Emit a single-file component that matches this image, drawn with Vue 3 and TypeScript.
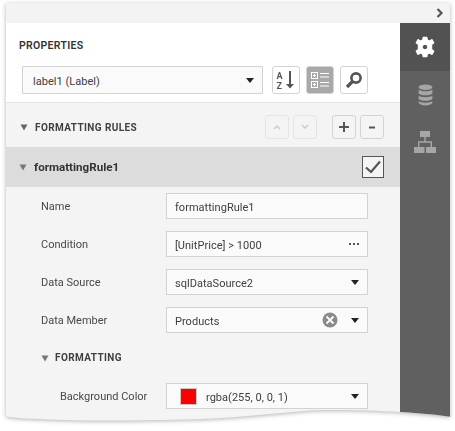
<script setup lang="ts">
interface Field { label: string; value: string; kind: 'text' | 'dots' | 'select' | 'clear' }
const fields: Field[] = [
  { label: 'Name', value: 'formattingRule1', kind: 'text' },
  { label: 'Condition', value: '[UnitPrice] > 1000', kind: 'dots' },
  { label: 'Data Source', value: 'sqlDataSource2', kind: 'select' },
  { label: 'Data Member', value: 'Products', kind: 'clear' },
]
</script>

<template>
  <div class="shadow">
    <div class="window">
      <div class="topbar">
        <svg class="chev" width="8" height="10" viewBox="0 0 8 10"><path d="M1.5 1 L5.5 5 L1.5 9" fill="none" stroke="#555" stroke-width="2.2" /></svg>
      </div>
      <div class="body">
        <div class="main">
          <section class="props">
            <h2 class="title">PROPERTIES</h2>
            <div class="toolbar">
              <div class="combo">
                <span class="val">label1 (Label)</span>
                <i class="caret"></i>
              </div>
              <button class="tool">
                <svg class="over" width="22" height="20" viewBox="0 0 22 20">
                  <text x="1.5" y="8.5" class="az">A</text>
                  <text x="1.5" y="18.5" class="az">Z</text>
                  <path d="M15 1 V16" stroke="#555" stroke-width="2" />
                  <path d="M11 14 H19 L15 18.5 Z" fill="#555" />
                </svg>
              </button>
              <button class="tool active">
                <svg width="20" height="20" viewBox="0 0 20 20" fill="none" stroke="#fff">
                  <rect x="1.5" y="2.5" width="6" height="6" />
                  <rect x="1.5" y="11.5" width="6" height="6" />
                  <path d="M3 5.5 H6 M4.5 4 V7 M3 14.5 H6 M4.5 13 V16 M10 3.5 H19 M10 7 H19 M10 12.5 H19 M10 16 H19" />
                </svg>
              </button>
              <button class="tool">
                <svg width="18" height="18" viewBox="0 0 18 18" fill="none" stroke="#555">
                  <circle cx="11" cy="7" r="4.6" stroke-width="2.6" />
                  <path d="M7.5 10.5 L2 16" stroke-width="3.2" />
                </svg>
              </button>
            </div>
          </section>

          <section class="rules">
            <svg class="tri" width="8" height="7" viewBox="0 0 8 7"><path d="M0.5 0.5 H7.5 L4 6.5 Z" fill="#666" /></svg>
            <h3 class="rules-title">FORMATTING RULES</h3>
            <div class="rule-btns">
              <button class="mini off">
                <svg width="8" height="6" viewBox="0 0 8 6"><path d="M1 5 L4 2 L7 5" fill="none" stroke="#ccc" stroke-width="1.5" /></svg>
              </button>
              <button class="mini off">
                <svg width="8" height="6" viewBox="0 0 8 6"><path d="M1 1 L4 4 L7 1" fill="none" stroke="#ccc" stroke-width="1.5" /></svg>
              </button>
              <button class="mini on plus">
                <svg width="12" height="12" viewBox="0 0 12 12"><path d="M6 1 V11 M1 6 H11" stroke="#555" stroke-width="2" /></svg>
              </button>
              <button class="mini on">
                <svg width="8" height="3" viewBox="0 0 8 3"><path d="M1 1.5 H7" stroke="#555" stroke-width="2" /></svg>
              </button>
            </div>
          </section>

          <section class="rule-head">
            <svg class="tri" width="8" height="7" viewBox="0 0 8 7"><path d="M0.5 0.5 H7.5 L4 6.5 Z" fill="#777" /></svg>
            <span class="rule-name">formattingRule1</span>
            <span class="check">
              <svg width="18" height="16" viewBox="0 0 18 16"><path d="M2 8.5 L7 13 L16 2.5" fill="none" stroke="#555" stroke-width="2.2" /></svg>
            </span>
          </section>

          <section class="fields">
            <div v-for="f in fields" :key="f.label" class="row">
              <label class="lbl">{{ f.label }}</label>
              <div class="input">
                <span class="val">{{ f.value }}</span>
                <span v-if="f.kind === 'dots'" class="dots"><b></b><b></b><b></b></span>
                <svg v-if="f.kind === 'clear'" class="clear" width="16" height="16" viewBox="0 0 16 16">
                  <circle cx="8" cy="8" r="7.5" fill="#8a8a8a" />
                  <path d="M4.5 4.5 L11.5 11.5 M11.5 4.5 L4.5 11.5" stroke="#fff" stroke-width="1.8" />
                </svg>
                <i v-if="f.kind === 'select' || f.kind === 'clear'" class="caret"></i>
              </div>
            </div>
            <div class="sub">
              <svg class="tri" width="8" height="7" viewBox="0 0 8 7"><path d="M0.5 0.5 H7.5 L4 6.5 Z" fill="#777" /></svg>
              <h3 class="sub-title">FORMATTING</h3>
            </div>
            <div class="row nested">
              <label class="lbl">Background Color</label>
              <div class="input">
                <span class="swatch"></span>
                <span class="val">rgba(255, 0, 0, 1)</span>
                <i class="caret"></i>
              </div>
            </div>
          </section>
        </div>

        <nav class="side">
          <div class="tab current">
            <svg width="24" height="24" viewBox="0 0 22 22">
              <path fill="#fff" stroke="#fff" stroke-width="1" stroke-linejoin="round" fill-rule="evenodd" d="M9.3 2.2 H12.7 L13.2 4.6 L15.2 5.5 L17.4 4.2 L19.1 7.1 L17.1 8.8 V13.2 L19.1 14.9 L17.4 17.8 L15.2 16.5 L13.2 17.4 L12.7 19.8 H9.3 L8.8 17.4 L6.8 16.5 L4.6 17.8 L2.9 14.9 L4.9 13.2 V8.8 L2.9 7.1 L4.6 4.2 L6.8 5.5 L8.8 4.6 Z M11 8.4 A2.6 2.6 0 1 0 11 13.6 A2.6 2.6 0 1 0 11 8.4 Z" />
            </svg>
          </div>
          <div class="tab">
            <svg width="15" height="22" viewBox="0 0 16 24" fill="#a6a6a6">
              <ellipse cx="8" cy="3.5" rx="7.5" ry="3" />
              <path d="M0.5 6 C2 8.6 14 8.6 15.5 6 V10 C14 13 2 13 0.5 10 Z" />
              <path d="M0.5 12.5 C2 15 14 15 15.5 12.5 V16 C14 19 2 19 0.5 16 Z" />
              <path d="M0.5 18.5 C2 21 14 21 15.5 18.5 V20.5 C14 24.5 2 24.5 0.5 20.5 Z" />
            </svg>
          </div>
          <div class="tab">
            <svg width="22" height="22" viewBox="0 0 22 22" fill="#a6a6a6">
              <rect x="6" y="0" width="10" height="6" />
              <rect x="0" y="16" width="10.5" height="6" />
              <rect x="12" y="16" width="10" height="6" />
              <path d="M10.3 6 H11.7 V10.3 H18 V16 H16.6 V11.7 H5.4 V16 H4 V10.3 H10.3 Z" />
            </svg>
          </div>
        </nav>
      </div>
    </div>
  </div>
</template>

<style>
html, body { margin: 0; background: #fff; }
</style>

<style scoped>
.shadow {
  width: 455px;
  height: 431px;
  padding: 3px 5px 0 6px;
  box-sizing: border-box;
  overflow: hidden;
  filter: drop-shadow(0 1px 2px rgba(0, 0, 0, 0.3));
  font-family: "Roboto", "Open Sans", sans-serif;
  color: #404040;
}
.window {
  width: 444px;
  height: 428px;
  overflow: hidden;
  background: #f4f4f4;
  clip-path: path("M0 0 H444 V413.7 C425 411 405 409.5 385 408.6 C350 407 315 406.5 298 408 C260 411 225 415.5 180 416.5 C130 417.5 90 418 60 417 C35 416 15 416 0 413.5 Z");
}
.topbar {
  height: 20px;
  background: #f3f3f3;
  display: flex;
  justify-content: flex-end;
  align-items: center;
  padding-right: 6px;
}
.chev { display: block; }
.body { display: flex; height: 408px; }
.main { width: 394px; flex: none; }
.props {
  height: 80px;
  background: #fff;
  box-sizing: border-box;
  padding: 14px 0 0 13px;
  border-bottom: 1px solid #e2e2e2;
}
.title {
  margin: 0;
  font: 600 10.5px/18px "Roboto", sans-serif;
  letter-spacing: 0.3px;
  color: #333;
}
.toolbar {
  display: flex;
  margin-top: 11px;
  margin-left: 3px;
}
.combo {
  width: 241px;
  height: 28px;
  box-sizing: border-box;
  border: 1px solid #d3d3d3;
  background: #fafafa;
  display: flex;
  align-items: center;
  padding: 0 8px 0 10px;
  justify-content: space-between;
  font-size: 11px;
  margin-right: 9px;
}
.caret {
  width: 0;
  height: 0;
  border-left: 4px solid transparent;
  border-right: 4px solid transparent;
  border-top: 5px solid #222;
  flex: none;
}
button { padding: 0; margin: 0; font: inherit; }
.tool {
  width: 28px;
  height: 28px;
  box-sizing: border-box;
  border: 1px solid #d3d3d3;
  border-radius: 3px;
  background: #fff;
  margin-right: 6px;
  display: flex;
  align-items: center;
  justify-content: center;
}
.tool.active { background: #a9a9a9; }
.over { overflow: visible; }
.az {
  font: 700 9px "Roboto", sans-serif;
  fill: #555;
}
.rules {
  height: 44px;
  box-sizing: border-box;
  display: flex;
  align-items: center;
  padding: 4px 0 0 14px;
}
.tri { display: block; flex: none; }
.rules-title {
  margin: 1px 0 0 7px;
  font: 700 10px/14px "Roboto", sans-serif;
  letter-spacing: 0.4px;
  color: #404040;
}
.rule-btns { margin-left: auto; margin-right: 16px; display: flex; }
.mini {
  width: 24px;
  height: 24px;
  box-sizing: border-box;
  border-radius: 3px;
  background: #f4f4f4;
  display: flex;
  align-items: center;
  justify-content: center;
  margin-left: 4px;
}
.mini.off { border: 1px solid #e4e4e4; }
.mini.on { border: 1px solid #d3d3d3; }
.mini.plus { margin-left: 15px; }
.rule-head {
  height: 40px;
  background: #dcdcdc;
  display: flex;
  align-items: center;
  padding-left: 13px;
  padding-right: 16px;
}
.rule-name {
  font: 700 11.6px/16px "Roboto", sans-serif;
  margin-left: 7px;
  color: #333;
}
.check {
  margin-left: auto;
  width: 22px;
  height: 22px;
  box-sizing: border-box;
  border: 1px solid #555;
  background: #f4f4f4;
  display: flex;
  align-items: center;
  justify-content: center;
}
.fields { padding-top: 6px; }
.row {
  display: flex;
  align-items: center;
  height: 26px;
  margin-bottom: 12px;
  padding-left: 35px;
}
.row.nested { padding-left: 54px; }
.lbl {
  font-size: 11px;
  line-height: 16px;
  padding-top: 1px;
  width: 125px;
  flex: none;
  color: #484848;
}
.row.nested .lbl { width: 106px; }
.input {
  width: 202px;
  height: 26px;
  box-sizing: border-box;
  border: 1px solid #d3d3d3;
  background: #fafafa;
  display: flex;
  align-items: center;
  padding: 0 8px 0 8px;
  font-size: 11px;
  flex: none;
}
.val { flex: 1; white-space: nowrap; padding-top: 2px; letter-spacing: 0.03px; }
.dots { display: flex; gap: 2px; }
.dots b { width: 2px; height: 2px; background: #555; }
.clear { margin-right: 13px; flex: none; }
.swatch {
  width: 17px;
  height: 17px;
  box-sizing: border-box;
  border: 1px solid #c8c8c8;
  background: #f00;
  margin: 0 9px 0 5px;
  flex: none;
}
.sub {
  display: flex;
  align-items: center;
  height: 26px;
  margin-bottom: 12px;
  padding-left: 35px;
}
.sub-title {
  margin: 0 0 0 6px;
  font: 700 10px/14px "Roboto", sans-serif;
  letter-spacing: 0.4px;
  color: #404040;
}
.side { width: 50px; flex: none; background: #606060; }
.tab {
  height: 47px;
  display: flex;
  align-items: center;
  justify-content: center;
}
.tab.current { height: 48px; background: #525252; }
</style>
